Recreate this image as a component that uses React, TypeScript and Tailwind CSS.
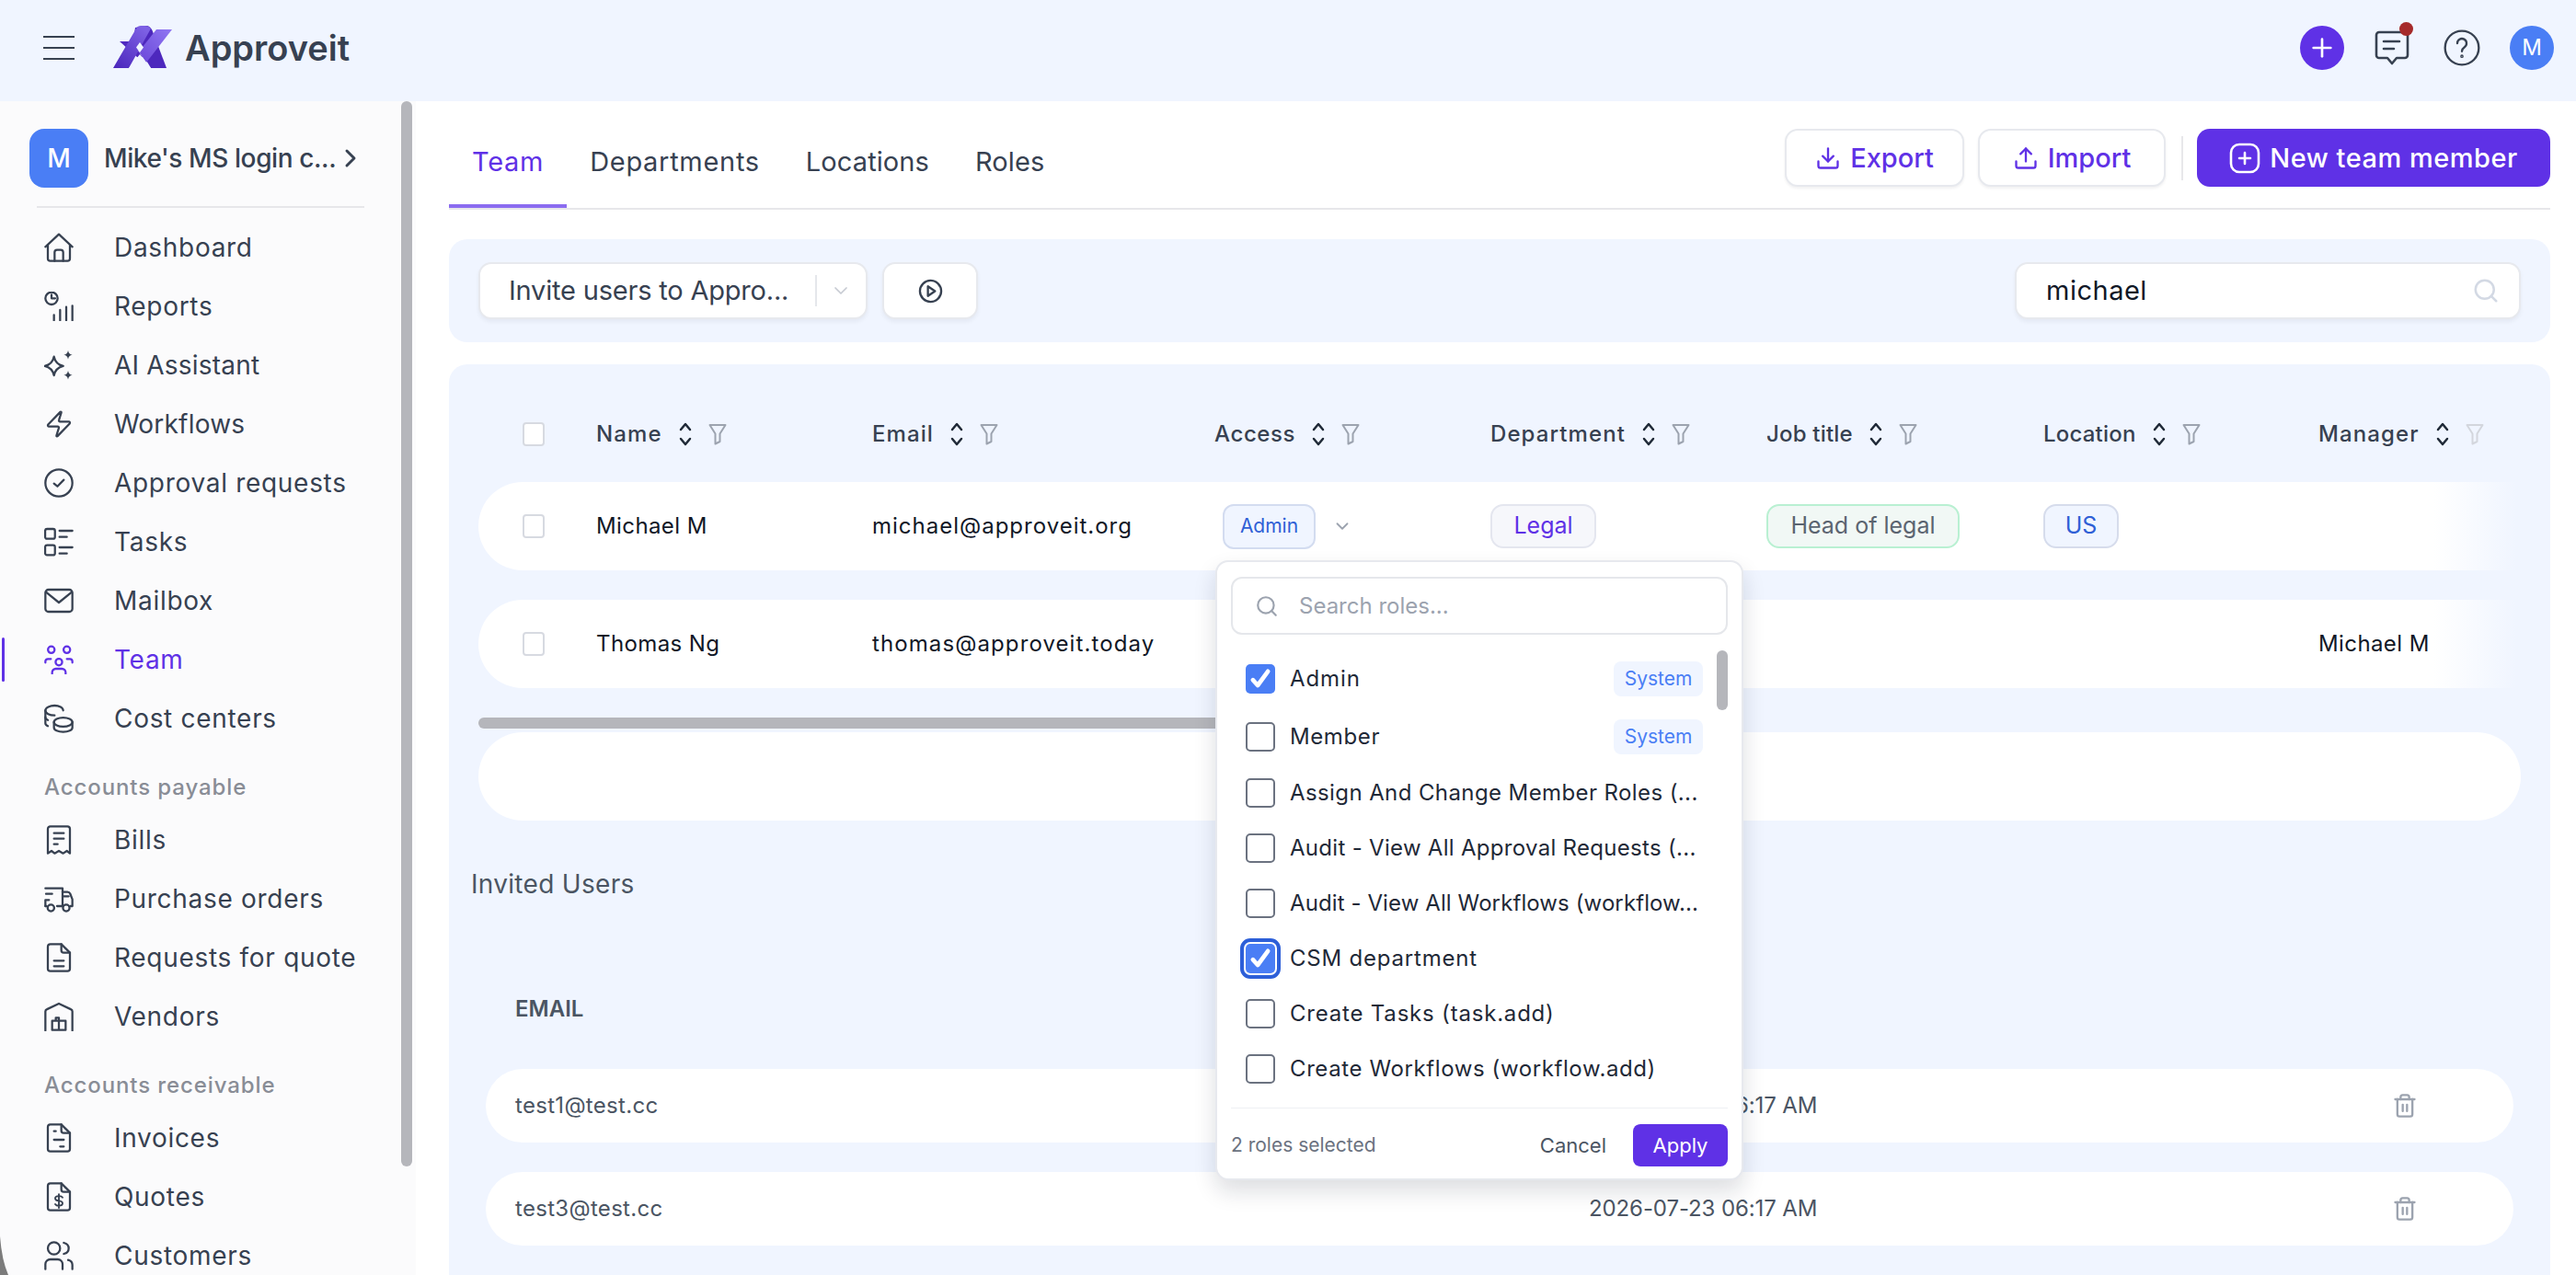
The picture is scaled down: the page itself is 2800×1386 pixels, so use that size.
import React from 'react';
import { ChevronDown, ChevronRight, Download, Plus, Search, Trash2, Upload, Zap } from 'lucide-react';

const Ico: React.FC<{ children: React.ReactNode; className?: string }> = ({ children, className = 'w-8 h-8' }) => (
  <svg viewBox="0 0 24 24" fill="none" stroke="currentColor" strokeWidth={1.7} strokeLinecap="round" strokeLinejoin="round" className={className}>
    {children}
  </svg>
);

const icons: Record<string, React.ReactNode> = {
  Dashboard: (
    <Ico>
      <path d="M1 11.5 12 1.2l11 10.3" />
      <path d="M3 9.8V21a2 2 0 0 0 2 2h14a2 2 0 0 0 2-2V9.8" />
      <path d="M8.5 23v-7a2 2 0 0 1 2-2h3a2 2 0 0 1 2 2v7" />
    </Ico>
  ),
  Reports: (
    <Ico>
      <circle cx="6" cy="5.5" r="5" />
      <path d="M6 2.5v3h3" />
      <path d="M8 19v4.5M13 15v8.5M18 12.500v11M23 11.500v12" />
    </Ico>
  ),
  'AI Assistant': (
    <Ico>
      <path d="M8 5c.9 4.300 3 6.600 7.500 7.700-4.500 1.100-6.600 3.300-7.500 7.600-.9-4.300-3-6.500-7.500-7.600C5 11.600 7.100 9.300 8 5Z" />
      <path fill="currentColor" stroke="none" d="M19.500 0c.5 2.300 1.300 3.100 3.500 3.600-2.200.5-3 1.300-3.500 3.600-.5-2.300-1.300-3.100-3.500-3.600 2.200-.5 3-1.300 3.500-3.600ZM19.500 16.500c.5 2.300 1.300 3.100 3.500 3.600-2.200.5-3 1.300-3.500 3.600-.5-2.300-1.300-3.100-3.500-3.600 2.200-.5 3-1.300 3.500-3.600Z" />
    </Ico>
  ),
  Workflows: <Zap className="w-8 h-8" strokeWidth={1.7} />,
  'Approval requests': (
    <Ico>
      <circle cx="12" cy="12" r="11" />
      <path d="m8 12.500 2.800 2.300L16 9.500" />
    </Ico>
  ),
  Tasks: (
    <Ico>
      <rect x="0.800" y="1.500" width="8" height="8" rx="1.500" />
      <rect x="0.800" y="14.800" width="8" height="8" rx="1.500" />
      <path d="M12.500 3h10.500M12.500 8h6M12.500 16.500h10.500M12.500 21.500h6" />
    </Ico>
  ),
  Mailbox: (
    <Ico>
      <rect x="1" y="3" width="22" height="18" rx="2.500" />
      <path d="M1.500 5 12 13.500 22.500 5" />
    </Ico>
  ),
  Team: (
    <Ico>
      <circle cx="5.800" cy="4" r="2.700" />
      <circle cx="18.500" cy="4" r="2.700" />
      <circle cx="12" cy="14" r="2.700" />
      <path d="M1 14.500v-1a2 2 0 0 1 2-2h2.500M23 14.500v-1a2 2 0 0 0-2-2h-2.500" />
      <path d="M6.500 23.500v-1a3 3 0 0 1 3-3h5a3 3 0 0 1 3 3v1" />
    </Ico>
  ),
  'Cost centers': (
    <Ico>
      <path d="M15.500 5.500c0-2.500-3.300-4-7-4s-7.500 1.500-7.500 4 3.500 4 7.500 4" />
      <path d="M1 5.500V16c0 .6.500 1.500 2 2.200" />
      <path d="M1 11c0 1 .8 1.800 2 2.300" />
      <ellipse cx="15.500" cy="15" rx="7.500" ry="3.700" />
      <path d="M8 15v4.500c0 2 3.300 3.500 7.500 3.500s7.500-1.500 7.500-3.500V15" />
    </Ico>
  ),
  Bills: (
    <Ico>
      <path d="M3 23V3a2 2 0 0 1 2-2h14a2 2 0 0 1 2 2v20l-2.500-2-3 2-3.500-2-3.500 2-2.500-2Z" />
      <path d="M8 6.500h8M8 11h8M8 15.500h3" />
    </Ico>
  ),
  'Purchase orders': (
    <Ico>
      <path d="M1 3.500h14v14.500h-4.500" />
      <path d="M1.500 8h5M1 18v-5h3" />
      <path d="M15 6.500h4c1 0 1.800.5 2.200 1.400L23 12.500V18h-1.500" />
      <path d="M16 10h4M1 18h1" />
      <circle cx="5.500" cy="19.500" r="2.700" />
      <circle cx="18" cy="19.500" r="2.700" />
    </Ico>
  ),
  'Requests for quote': (
    <Ico>
      <path d="M14 1H5a2 2 0 0 0-2 2v18a2 2 0 0 0 2 2h14a2 2 0 0 0 2-2V8l-7-7Z" />
      <path d="M14 1v5a2 2 0 0 0 2 2h5M8 14.500h8M8 19h8" />
    </Ico>
  ),
  Vendors: (
    <Ico>
      <path d="M1 23.500V8a2 2 0 0 1 1.300-1.900L12 1.500l9.700 4.600A2 2 0 0 1 23 8v15.500" />
      <path d="M6.500 23v-7.500h5.500V23ZM12 23v-10H9.500v2.500M12 15.500h5.500V23H6.500" />
    </Ico>
  ),
  Invoices: (
    <Ico>
      <path d="M14 1H5a2 2 0 0 0-2 2v18a2 2 0 0 0 2 2h14a2 2 0 0 0 2-2V8l-7-7Z" />
      <path d="M14 1v5a2 2 0 0 0 2 2h5M8 6.500h1.500M8 13.500h8M13 19h3" />
    </Ico>
  ),
  Quotes: (
    <Ico>
      <path d="M14 1H5a2 2 0 0 0-2 2v18a2 2 0 0 0 2 2h14a2 2 0 0 0 2-2V8l-7-7Z" />
      <path d="M14 1v5a2 2 0 0 0 2 2h5" />
      <path d="M15 12.500c-.5-.8-1.500-1.200-3-1.200-1.700 0-3 .7-3 2s1.300 1.800 3 2 3 .8 3 2-1.300 2-3 2c-1.500 0-2.500-.5-3-1.300M12 9.800v11.200" strokeWidth={1.400} />
    </Ico>
  ),
  Customers: (
    <Ico>
      <circle cx="8" cy="6" r="5" />
      <path d="M16 1.500c2.200.5 4 2.200 4 4.500s-1.800 4-4 4.500" />
      <path d="M1 23v-4a4 4 0 0 1 4-4h6a4 4 0 0 1 4 4v4" />
      <path d="M19.500 15.500c2 .5 3.500 1.900 3.500 4V23" />
    </Ico>
  ),
};

const NavItem: React.FC<{ label: string; active?: boolean }> = ({ label, active }) => (
  <div className={`relative flex h-16 items-center pl-12 text-[28px] tracking-[0.7px] ${active ? 'text-[#5f31e6]' : 'text-[#374151]'}`}>
    {active && <span className="absolute left-0.5 top-2 h-12 w-[3px] rounded-full bg-[#5f31e6]" />}
    <span className="flex w-[76px] shrink-0">{icons[label]}</span>
    <span className={label === 'Workflows' || label === 'AI Assistant' ? 'tracking-[0.2px]' : ''}>{label}</span>
  </div>
);

const SectionLabel: React.FC<{ label: string }> = ({ label }) => (
  <div className="mb-[11px] mt-[29px] h-7 pl-12 text-[24px] font-medium leading-7 tracking-[0.9px] text-[#898d96]">{label}</div>
);

const Sidebar = () => (
  <aside className="relative w-[452px] shrink-0 overflow-hidden bg-[#fbfbfc]">
    <span className="absolute left-[436px] top-0 h-[1158px] w-3 rounded-full bg-[#b5b6bb]" />
    <div className="flex items-center pl-8 pt-[30px]">
      <div className="flex h-16 w-16 items-center justify-center rounded-2xl bg-[#4a7ef5] text-[28px] font-medium text-white">M</div>
      <span className="ml-[17px] w-[256px] whitespace-nowrap text-[28px] font-medium tracking-[-0.4px] text-[#374151]">Mike's MS login c...</span>
      <ChevronRight className="-ml-1 h-8 w-8 text-[#374151]" strokeWidth={2.2} />
    </div>
    <div className="mb-[11px] ml-10 mt-5 h-0.5 w-[356px] bg-[#e7e7ea]" />
    {['Dashboard', 'Reports', 'AI Assistant', 'Workflows', 'Approval requests', 'Tasks', 'Mailbox', 'Team', 'Cost centers'].map((l) => (
      <NavItem key={l} label={l} active={l === 'Team'} />
    ))}
    <SectionLabel label="Accounts payable" />
    {['Bills', 'Purchase orders', 'Requests for quote', 'Vendors'].map((l) => (
      <NavItem key={l} label={l} />
    ))}
    <SectionLabel label="Accounts receivable" />
    {['Invoices', 'Quotes', 'Customers'].map((l) => (
      <NavItem key={l} label={l} />
    ))}
  </aside>
);

const Logo = () => (
  <svg viewBox="0 0 64 46" className="h-[46px] w-16">
    <defs>
      <linearGradient id="lg1" x1="0" y1="1" x2="0.7" y2="0">
        <stop offset="0" stopColor="#4a26bb" />
        <stop offset="1" stopColor="#7d60e4" />
      </linearGradient>
      <linearGradient id="lg2" x1="1" y1="0" x2="0" y2="1">
        <stop offset="0" stopColor="#9077f2" />
        <stop offset="1" stopColor="#6a47d8" />
      </linearGradient>
    </defs>
    <polygon points="7,17 20,17 32,34 26,34" fill="#5029c0" />
    <path d="M24 2 36 0c3 0 5 2 6.500 5L58 46H41L22 14Z" fill="#4d28bd" />
    <polygon points="47,4 64,4 36,40 28,28" fill="url(#lg2)" />
    <path d="M0 46 25 3c1-2 3-3 5-3h4c3 0 5 1 7 3L17 46Z" fill="url(#lg1)" />
    <polygon points="17,46 41,46 29,31" fill="#f0f5ff" />
    <polygon points="29,18 33,23.500 29,29 25,23.500" fill="#f0f5ff" />
  </svg>
);

const TopBar = () => (
  <header className="flex h-[110px] shrink-0 items-center bg-[#f0f5ff] pb-1.5 pl-[47px] pr-6">
    <div className="flex w-[34px] flex-col gap-[10px]">
      <span className="h-0.5 bg-[#374151]" />
      <span className="h-0.5 bg-[#374151]" />
      <span className="h-0.5 bg-[#374151]" />
    </div>
    <div className="-mt-0.5 ml-[42px]">
      <Logo />
    </div>
    <span className="ml-[14px] text-[38px] font-semibold text-[#374151]">Approveit</span>
    <div className="ml-auto flex items-center">
      <span className="flex h-12 w-12 items-center justify-center rounded-full bg-[#5f31e6] text-white">
        <Plus className="h-8 w-8" strokeWidth={2} />
      </span>
      <span className="relative ml-[33px] flex text-[#374151]">
        <svg viewBox="0 0 38 40" fill="none" stroke="currentColor" strokeWidth={2.600} strokeLinejoin="round" strokeLinecap="round" className="h-10 w-[38px]">
          <path d="M5 3h28a3 3 0 0 1 3 3v22a3 3 0 0 1-3 3h-9l-5 6-5-6H5a3 3 0 0 1-3-3V6a3 3 0 0 1 3-3Z" />
          <path d="M10 13h17M10 21h11" />
        </svg>
        <span className="absolute -right-1 -top-2 h-[15px] w-[15px] rounded-full bg-[#a52a2a]" />
      </span>
      <svg viewBox="0 0 24 24" fill="none" stroke="currentColor" strokeWidth={1.400} strokeLinecap="round" className="ml-[37px] h-10 w-10 text-[#374151]">
        <circle cx="12" cy="12" r="11" />
        <path d="M9 9a3 3 0 1 1 4.700 2.500c-1 .7-1.700 1.300-1.700 2.700" />
        <circle cx="12" cy="17.500" r="0.400" />
      </svg>
      <span className="ml-[32px] flex h-12 w-12 items-center justify-center rounded-full bg-[#4a7ef5] text-[24px] text-white">M</span>
    </div>
  </header>
);

const OutlineBtn: React.FC<{ icon: React.ReactNode; label: string; className: string }> = ({ icon, label, className }) => (
  <button className={`flex h-[63px] items-center justify-center gap-2.5 rounded-[14px] border-2 border-[#e7e9ee] bg-white text-[29px] font-medium text-[#5f31e6] shadow-[0_2px_3px_rgba(16,24,40,0.06)] ${className}`}>
    {icon}
    {label}
  </button>
);

const Sort = () => (
  <svg viewBox="0 0 14 28" fill="none" stroke="#1f2937" strokeWidth={2.500} strokeLinecap="round" strokeLinejoin="round" className="h-7 w-3.5">
    <path d="m2 9 5-6 5 6M2 19l5 6 5-6" />
  </svg>
);

const Funnel: React.FC<{ faded?: boolean }> = ({ faded }) => (
  <svg viewBox="0 0 20 24" fill="none" stroke={faded ? '#d3d6dd' : '#9ca3af'} strokeWidth={2} strokeLinejoin="round" className="h-6 w-5">
    <path d="M1.500 2h17l-6 9.500V20l-5 2.500V11.500Z" />
  </svg>
);

const columns = [
  { label: 'Name', w: 'w-[300px] tracking-[1.1px]' },
  { label: 'Email', w: 'w-[372px] tracking-[1.1px]' },
  { label: 'Access', w: 'w-[300px] tracking-[0.6px]' },
  { label: 'Department', w: 'w-[300px] tracking-[1.1px]' },
  { label: 'Job title', w: 'w-[301px] tracking-[0.2px]' },
  { label: 'Location', w: 'w-[299px] tracking-[0.2px]' },
  { label: 'Manager', w: 'w-[230px] tracking-[1.1px]' },
];

const Box = () => <span className="h-[26px] w-6 shrink-0 rounded-[4px] border-2 border-[#d7dae1] bg-white" />;

const Chip: React.FC<{ className: string; children: React.ReactNode }> = ({ className, children }) => (
  <span className={`inline-flex h-[48px] items-center justify-center rounded-[14px] border-2 text-[25px] ${className}`}>{children}</span>
);

const RowFade = () => <span className="absolute right-0 top-0 h-full w-[90px] bg-linear-to-r from-white to-[#f0f5ff]" />;

const TeamTable = () => (
  <div className="pl-8">
    <div className="flex h-[128px] items-center pl-12 pt-[24px]">
      <Box />
      <div className="ml-[56px] flex">
        {columns.map((c, i) => (
          <div key={c.label} className={`flex shrink-0 items-center text-[24px] font-medium text-[#374151] ${c.w}`}>
            <span>{c.label}</span>
            <span className="ml-[18px] flex">
              <Sort />
            </span>
            <span className="ml-[18px] flex">
              <Funnel faded={i === 6} />
            </span>
          </div>
        ))}
      </div>
    </div>
    <div className="relative flex h-24 w-[2215px] items-center overflow-hidden rounded-l-[48px] bg-white pl-12 text-[24px] text-[#111827]">
      <Box />
      <div className="ml-[56px] flex items-center">
        <div className="w-[300px] shrink-0 tracking-[0.4px]">Michael M</div>
        <div className="w-[372px] shrink-0 tracking-[1px]">michael@approveit.org</div>
        <div className="flex w-[300px] shrink-0 items-center pl-[9px]">
          <span className="inline-flex h-[49px] w-[101px] items-center justify-center rounded-[12px] border-2 border-[#d3dcf0] bg-[#f0f5ff] text-[21px] text-[#2f5fd6]">Admin</span>
          <ChevronDown className="ml-[18px] h-[22px] w-[22px] text-[#9ca3af]" strokeWidth={2} />
        </div>
        <div className="w-[300px] shrink-0">
          <Chip className="w-[115px] border-[#e4e6ef] bg-[#f6f7fb] text-[#5f31e6]">Legal</Chip>
        </div>
        <div className="w-[301px] shrink-0">
          <Chip className="w-[210px] border-[#b9f0d2] bg-[#f1f8f5] text-[#5b6470]">Head of legal</Chip>
        </div>
        <div className="w-[299px] shrink-0">
          <Chip className="w-[82px] border-[#d6dcec] bg-[#f0f5ff] text-[#2f5fd6]">US</Chip>
        </div>
      </div>
      <RowFade />
    </div>
    <div className="relative mt-8 flex h-24 w-[2215px] items-center overflow-hidden rounded-l-[48px] bg-white pl-12 text-[24px] text-[#111827]">
      <Box />
      <div className="ml-[56px] flex items-center">
        <div className="w-[300px] shrink-0 tracking-[0.4px]">Thomas Ng</div>
        <div className="w-[372px] shrink-0 whitespace-nowrap tracking-[1.1px]">thomas@approveit.today</div>
        <div className="w-[1200px] shrink-0" />
        <div className="shrink-0 whitespace-nowrap tracking-[0.4px]">Michael M</div>
      </div>
      <RowFade />
    </div>
    <div className="mt-8 h-3 w-[900px] rounded-full bg-[#b5b6bb]" />
    <div className="mt-1 h-24 w-[2220px] rounded-full bg-white" />
  </div>
);

const InvitedRow: React.FC<{ email: string }> = ({ email }) => (
  <div className="flex h-20 w-[2204px] items-center rounded-full bg-white pl-8 text-[24px] text-[#4b5563]">
    <span className="w-[1167px] shrink-0 tracking-[0.3px]">{email}</span>
    <span className="w-[873px] shrink-0 tracking-[-0.1px]">2026-07-23 06:17 AM</span>
    <Trash2 className="h-7 w-7 text-[#9ca3af]" strokeWidth={2} />
  </div>
);

const Invited = () => (
  <div>
    <div className="ml-6 mt-[49px] h-10 text-[28px] leading-10 tracking-[0.3px] text-[#4b5563]">Invited Users</div>
    <div className="ml-[72px] mt-[102px] h-7 text-[24px] font-semibold leading-7 text-[#4b5563]">EMAIL</div>
    <div className="ml-10 mt-[51px] flex flex-col gap-8">
      <InvitedRow email="test1@test.cc" />
      <InvitedRow email="test3@test.cc" />
    </div>
  </div>
);

const CheckBox: React.FC<{ checked?: boolean; focused?: boolean }> = ({ checked, focused }) => (
  <span
    className={`flex h-8 w-8 shrink-0 items-center justify-center rounded-[5px] ${
      checked ? 'bg-[#4a7ef5]' : 'border-2 border-[#6b7280] bg-white'
    } ${focused ? 'outline-[4px] outline-offset-[2px] outline-[#2d5fd8]' : ''}`}
  >
    {checked && (
      <svg viewBox="0 0 24 24" fill="none" stroke="white" strokeWidth={4} strokeLinecap="round" strokeLinejoin="round" className="h-7 w-7">
        <path d="m5 13 4.500 5L19 5" />
      </svg>
    )}
  </span>
);

const roles = [
  { label: 'Admin', checked: true, system: true, tr: 'tracking-[0.9px]' },
  { label: 'Member', system: true, tr: 'tracking-[0.6px]' },
  { label: 'Assign And Change Member Roles (...', tr: 'tracking-[0.4px]' },
  { label: 'Audit - View All Approval Requests (...', tr: 'tracking-[0.3px]' },
  { label: 'Audit - View All Workflows (workflow...', tr: 'tracking-[0.1px]' },
  { label: 'CSM department', checked: true, focused: true, tr: 'tracking-[0.8px]' },
  { label: 'Create Tasks (task.add)', tr: 'tracking-[0.8px]' },
  { label: 'Create Workflows (workflow.add)', tr: 'tracking-[0.6px]' },
];

const RolesPopover = () => (
  <div className="absolute left-[833px] top-[213px] h-[674px] w-[574px] rounded-[14px] border-2 border-[#e7e9ee] bg-white px-[15px] pt-4 shadow-[0_12px_24px_rgba(16,24,40,0.14)]">
    <div className="flex h-[63px] w-[540px] items-center rounded-xl border-2 border-[#e5e7eb] px-6 text-[24px] text-[#9ca3af]">
      <Search className="h-[26px] w-[26px]" strokeWidth={2} />
      <span className="ml-[22px]">Search roles...</span>
    </div>
    <div className="relative mt-4">
      <span className="absolute left-[528px] top-[1px] h-[65px] w-3 rounded-full bg-[#b5b6bb]" />
      {roles.map((r) => (
        <div key={r.label} className={`flex items-center pl-4 text-[24px] text-[#1f2937] ${r.system ? 'h-[63px]' : 'h-[60px]'}`}>
          <CheckBox checked={r.checked} focused={r.focused} />
          <span className={`ml-[16px] whitespace-nowrap ${r.tr}`}>{r.label}</span>
          {r.system && (
            <span className="ml-auto mr-[27px] flex h-[38px] w-[97px] items-center justify-center rounded-[8px] bg-[#f0f5ff] text-[21px] text-[#4a7ef5]">System</span>
          )}
        </div>
      ))}
    </div>
    <div className="mt-3 h-px w-[540px] bg-[#eef0f4]" />
    <div className="mt-[17px] flex w-[540px] items-center text-[21px] text-[#6b7280]">
      <span>2 roles selected</span>
      <span className="ml-auto text-[22px] text-[#4b5563]">Cancel</span>
      <button className="ml-[29px] flex h-[46px] w-[103px] items-center justify-center rounded-[8px] bg-[#5f31e6] text-[22px] text-white">Apply</button>
    </div>
  </div>
);

export default function App() {
  return (
    <div className="relative h-[1386px] w-[2800px] overflow-hidden bg-white font-['Inter',sans-serif]">
      <TopBar />
      <div className="flex h-[1276px]">
        <Sidebar />
        <main className="flex min-w-0 flex-1 flex-col pl-9 pr-7">
          <div className="flex h-[118px] shrink-0 items-start border-b-2 border-[#e7e7ea] pt-[30px]">
            <div className="flex text-[29px] text-[#374151]">
              <div className="h-[86px] border-b-4 border-[#8b6cf0] px-[25px] pt-[14px] tracking-[0.7px] text-[#5f31e6]">Team</div>
              <div className="px-[25px] pt-[14px] tracking-[0.7px]">Departments</div>
              <div className="px-[25px] pt-[14px] tracking-[0.1px]">Locations</div>
              <div className="px-[25px] pt-[14px] tracking-[0.1px]">Roles</div>
            </div>
            <div className="ml-auto flex items-center">
              <OutlineBtn icon={<Download className="h-7 w-7" strokeWidth={2} />} label="Export" className="w-[195px]" />
              <OutlineBtn icon={<Upload className="h-7 w-7" strokeWidth={2} />} label="Import" className="ml-[15px] w-[204px]" />
              <span className="ml-[17px] mr-[15px] h-12 w-0.5 bg-[#e7e7ea]" />
              <button className="flex h-[63px] w-[384px] items-center justify-center gap-2.5 rounded-[14px] bg-[#5f31e6] text-[29px] font-medium tracking-[0.5px] text-white">
                <svg viewBox="0 0 34 34" fill="none" stroke="currentColor" strokeWidth={2.600} strokeLinecap="round" className="h-[34px] w-[34px]">
                  <rect x="2" y="2" width="30" height="30" rx="9" />
                  <path d="M17 11v12M11 17h12" />
                </svg>
                New team member
              </button>
            </div>
          </div>

          <div className="mt-8 flex h-[112px] shrink-0 items-center rounded-[20px] bg-[#f0f5ff] pl-8 pr-8">
            <div className="flex h-[62px] w-[423px] items-center rounded-[14px] border-2 border-[#e7e9ee] bg-white pl-[31px] text-[29px] tracking-[-0.2px] text-[#374151] shadow-[0_3px_4px_rgba(16,24,40,0.05)]">
              <span className="w-[333px] whitespace-nowrap">Invite users to Appro...</span>
              <span className="h-[34px] w-0.5 bg-[#e5e7eb]" />
              <ChevronDown className="ml-[14px] h-6 w-6 text-[#c6cad2]" strokeWidth={1.700} />
            </div>
            <div className="ml-4 flex h-[62px] w-[104px] items-center justify-center rounded-[14px] border-2 border-[#e7e9ee] bg-white shadow-[0_3px_4px_rgba(16,24,40,0.05)]">
              <svg viewBox="0 0 28 28" fill="none" stroke="#374151" strokeWidth={2.400} strokeLinejoin="round" className="h-[27px] w-[27px]">
                <circle cx="14" cy="14" r="12" />
                <path d="M11 8.500v11l8-5.500Z" />
              </svg>
            </div>
            <div className="ml-auto flex h-[62px] w-[550px] items-center rounded-[14px] border-2 border-[#e7e9ee] bg-white pl-8 pr-[21px] text-[29px] tracking-[0.5px] text-[#111827] shadow-[0_3px_4px_rgba(16,24,40,0.05)]">
              michael
              <Search className="ml-auto h-[30px] w-[30px] text-[#d3d9e4]" strokeWidth={2} />
            </div>
          </div>

          <div className="relative mt-6 min-h-0 flex-1 rounded-t-[20px] bg-[#f0f5ff]">
            <TeamTable />
            <Invited />
            <RolesPopover />
          </div>
        </main>
      </div>
      <svg viewBox="0 0 10 42" className="absolute bottom-0 left-0 h-[42px] w-2.5">
        <path d="M0 0Q2 26 9 42H0Z" fill="#7c7c7c" />
      </svg>
    </div>
  );
}
